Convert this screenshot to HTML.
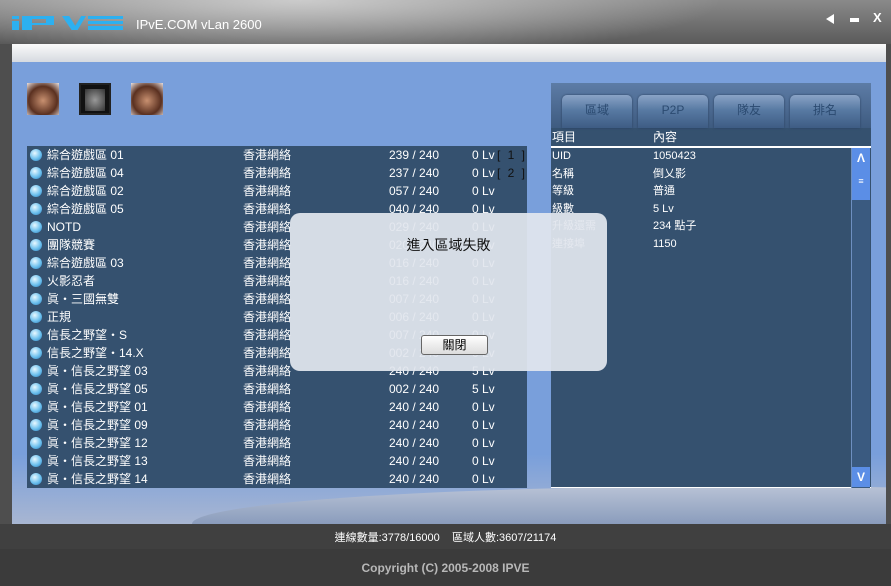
<!DOCTYPE html>
<html style="width:891px;height:586px;overflow:hidden"><head><meta charset="utf-8"><style>
*{margin:0;padding:0;box-sizing:border-box}
body{width:891px;height:586px;overflow:hidden;background:#3a3a3a;font-family:"Liberation Sans","Noto Sans CJK TC",sans-serif;position:relative}
.top{position:absolute;left:0;top:0;width:891px;height:44px;background:linear-gradient(180deg,#8a8a8a,#5a5a5a);}
.top:before{content:"";position:absolute;left:0;top:0;width:891px;height:44px;background:radial-gradient(ellipse 420px 60px at 300px 0,rgba(215,215,215,.85),rgba(0,0,0,0))}
.side{position:absolute;left:0;top:44px;width:891px;height:480px;background:#4e4e4e}
.main{position:absolute;left:12px;top:44px;width:874px;height:480px;background:#799fdb;overflow:hidden}
.strip{position:absolute;left:0;top:0;width:874px;height:18px;background:linear-gradient(#fafafa,#d6dae0)}
.wave{position:absolute;left:180px;top:442px;width:1100px;height:38px;border-radius:50% 50% 0 0/100% 100% 0 0;background:linear-gradient(#b9c3d6,#8a9cbc)}
.bot{position:absolute;left:0;top:410px;width:874px;height:70px;background:linear-gradient(rgba(121,159,219,0),#a8b6d2)}
.list{position:absolute;left:27px;top:146px;width:500px;height:342px;background:#35516f;color:#fff;font-size:12px;overflow:hidden}
.r{position:absolute;left:0;height:18px;width:500px;line-height:18px;white-space:nowrap}
.r span{position:absolute}
.b{left:3px;top:3px;width:12px;height:12px;border-radius:50%;background:radial-gradient(circle at 40% 35%,#e8f8ff,#6cc0ee 55%,#2a7ab8)}
.rp{position:absolute;left:551px;top:83px;width:320px;height:405px;background:#35516f;color:#fff;font-size:12px;overflow:hidden}
.rp .tabbg{position:absolute;left:0;top:0;width:320px;height:45px;background:linear-gradient(#5d7ca6,#3e5b80)}
.tab{position:absolute;top:12px;width:70px;height:33px;border-radius:5px 5px 0 0;background:linear-gradient(#8aa3c6,#587aa3 45%,#3e5c84);color:#2b4a70;text-align:center;line-height:30px;font-size:12px;box-shadow:0 0 2px #2a4060}
.sb{position:absolute;left:300px;top:65px;width:19px;height:340px;background:#3a5a80;border-left:1px solid #6e8fc0;overflow:hidden}
.dlg{position:absolute;left:290px;top:213px;width:317px;height:158px;border-radius:10px;background:rgba(226,230,238,.93)}
.btn{position:absolute;left:131px;top:122px;width:67px;height:20px;border:1px solid #666;border-radius:3px;background:linear-gradient(#fff,#dcdcdc);font-size:12px;text-align:center;line-height:18px}
.stat{position:absolute;left:0;top:524px;width:891px;height:25px;background:#404040;color:#fff;font-size:11px;text-align:center;line-height:28px}
.foot{position:absolute;left:0;top:549px;width:891px;height:37px;background:#3b3b3b;color:#b8b8b8;font-size:12px;font-weight:bold;text-align:center;line-height:38px}
.av{position:absolute;top:83px;width:32px;height:32px}
.lg{position:absolute;background:#2db0f0}
</style></head><body>
<div class="top"></div>
<div style="position:absolute;left:12px;top:14px;width:111px;height:17px">
<div class="lg" style="left:0;top:2px;width:7px;height:3px"></div>
<div class="lg" style="left:0;top:7px;width:7px;height:9px"></div>
<div class="lg" style="left:10px;top:2px;width:10px;height:14px"></div>
<div class="lg" style="left:20px;top:2px;width:22px;height:3px"></div>
<div class="lg" style="left:34px;top:5px;width:8px;height:6px"></div>
<div class="lg" style="left:20px;top:9px;width:14px;height:2px"></div>
<div class="lg" style="left:50px;top:2px;width:24px;height:14px;clip-path:polygon(0 0,30% 0,55% 70%,80% 0,100% 0,65% 100%,40% 100%)"></div>
<div class="lg" style="left:76px;top:2px;width:35px;height:3px"></div>
<div class="lg" style="left:76px;top:7px;width:35px;height:3px"></div>
<div class="lg" style="left:76px;top:12px;width:35px;height:4px"></div>
</div>
<div style="position:absolute;left:136px;top:17px;color:#fff;font-size:13px">IPvE.COM vLan 2600</div>
<div style="position:absolute;left:826px;top:14px;width:0;height:0;border-top:5px solid transparent;border-bottom:5px solid transparent;border-right:8px solid #fff"></div>
<div style="position:absolute;left:850px;top:18px;width:9px;height:4px;background:#fff"></div>
<div style="position:absolute;left:873px;top:10px;color:#fff;font-size:13px;font-weight:bold">X</div>
<div class="side"></div>
<div class="main"><div class="bot"></div><div class="wave"></div><div class="strip"></div></div>
<div class="av" style="left:27px;background:radial-gradient(circle at 50% 55%,#c89070,#5a3020 60%,#e8e0e0)"></div>
<div class="av" style="left:79px;background:#111;border:2px solid #222"><div style="margin:4px;width:20px;height:22px;background:radial-gradient(#999,#333)"></div></div>
<div class="av" style="left:131px;background:radial-gradient(circle at 50% 55%,#c89070,#5a3020 60%,#e8e0e0)"></div>
<div class="list" id="L"></div>
<div class="rp">
<div class="tabbg"></div>
<div class="tab" style="left:11px">區域</div><div class="tab" style="left:87px">P2P</div><div class="tab" style="left:163px">隊友</div><div class="tab" style="left:239px">排名</div>
<div style="position:absolute;left:1px;top:45px">項目</div><div style="position:absolute;left:102px;top:45px">內容</div>
<div style="position:absolute;left:0;top:63px;width:320px;height:2px;background:#fff"></div>
<div style="position:absolute;left:0;top:404px;width:320px;height:1px;background:#fff"></div>
<div style="position:absolute;left:1px;top:65px;line-height:17.5px;font-size:11px">UID<br>名稱<br>等級<br>級數<br>升級還需<br>連接埠</div>
<div style="position:absolute;left:102px;top:65px;line-height:17.5px;font-size:11px">1050423<br>倒乂影<br>普通<br>5 Lv<br>234 點子<br>1150</div>
<div class="sb">
<div style="position:absolute;left:0;top:0;width:18px;height:19px;background:#5b8ee6;color:#fff;font-weight:bold;text-align:center;line-height:20px">Λ</div>
<div style="position:absolute;left:0;top:19px;width:18px;height:33px;background:#5b8ee6;color:#fff;text-align:center;font-size:9px;line-height:28px">≡</div>
<div style="position:absolute;left:0;top:319px;width:18px;height:20px;background:#5b8ee6;color:#fff;font-weight:bold;text-align:center;line-height:20px">V</div>
</div>
</div>
<div class="dlg">
<div style="position:absolute;left:0;width:317px;top:22px;text-align:center;font-size:14px;color:#111">進入區域失敗</div>
<div class="btn">關閉</div>
</div>
<div class="stat">連線數量:3778/16000&nbsp;&nbsp;&nbsp;&nbsp;區域人數:3607/21174</div>
<div class="foot">Copyright (C) 2005-2008 IPVE</div>
<script>
var d=[["綜合遊戲區 01","239 / 240","0 Lv","[ 1 ]"],["綜合遊戲區 04","237 / 240","0 Lv","[ 2 ]"],["綜合遊戲區 02","057 / 240","0 Lv",""],["綜合遊戲區 05","040 / 240","0 Lv",""],["NOTD","029 / 240","0 Lv",""],["團隊競賽","020 / 240","0 Lv",""],["綜合遊戲區 03","016 / 240","0 Lv",""],["火影忍者","016 / 240","0 Lv",""],["眞・三國無雙","007 / 240","0 Lv",""],["正規","006 / 240","0 Lv",""],["信長之野望・S","007 / 240","0 Lv",""],["信長之野望・14.X","002 / 240","0 Lv",""],["眞・信長之野望 03","240 / 240","5 Lv",""],["眞・信長之野望 05","002 / 240","5 Lv",""],["眞・信長之野望 01","240 / 240","0 Lv",""],["眞・信長之野望 09","240 / 240","0 Lv",""],["眞・信長之野望 12","240 / 240","0 Lv",""],["眞・信長之野望 13","240 / 240","0 Lv",""],["眞・信長之野望 14","240 / 240","0 Lv",""]];
var h="";d.forEach(function(r,i){h+='<div class="r" style="top:'+(i*18)+'px"><span class="b"></span><span style="left:20px">'+r[0]+'</span><span style="left:216px">香港網絡</span><span style="left:362px">'+r[1]+'</span><span style="left:445px">'+r[2]+'</span><span style="left:470px;color:#111;letter-spacing:2px">'+r[3]+'</span></div>'});
document.getElementById("L").innerHTML=h;
</script>
</body></html>
